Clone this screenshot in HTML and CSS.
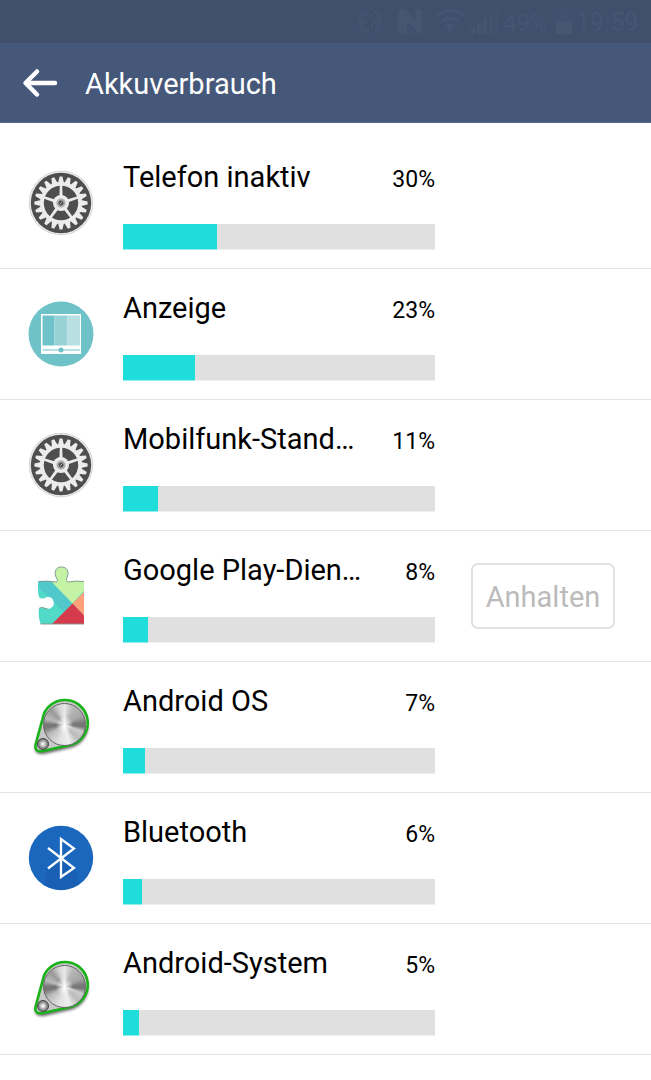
FILE: index.html
```html
<!DOCTYPE html>
<html lang="de">
<head>
<meta charset="utf-8">
<title>Akkuverbrauch</title>
<link rel="stylesheet" href="styles.css">
</head>
<body>
<svg class="defs" width="0" height="0" aria-hidden="true">
  <defs>
    <radialGradient id="hub"><stop offset="0" stop-color="#333"/><stop offset=".4" stop-color="#555"/><stop offset=".65" stop-color="#aaa"/><stop offset="1" stop-color="#bbb"/></radialGradient>
    <g id="tooth"><path d="M-3-20L-1.400-26.600H1.400L3-20Z"/></g>
    <g id="teeth"><use href="#tooth"/><use href="#tooth" transform="rotate(18)"/><use href="#tooth" transform="rotate(36)"/><use href="#tooth" transform="rotate(54)"/><use href="#tooth" transform="rotate(72)"/></g>
    <path id="spoke" d="M-1.6-5L-1.2-18H1.2L1.6-5Z"/>
    <symbol id="gear" viewBox="-33 -33 66 66">
      <circle r="32.2" fill="#d0d0d0"/><circle r="31.5" fill="#ececec"/><circle r="30.2" fill="#4e4e4e"/>
      <g fill="#ececec"><use href="#teeth"/><use href="#teeth" transform="rotate(90)"/><use href="#teeth" transform="rotate(180)"/><use href="#teeth" transform="rotate(270)"/></g>
      <circle r="19.100" fill="none" stroke="#ececec" stroke-width="3.800"/>
      <g fill="#ececec"><use href="#spoke"/><use href="#spoke" transform="rotate(72)"/><use href="#spoke" transform="rotate(144)"/><use href="#spoke" transform="rotate(216)"/><use href="#spoke" transform="rotate(288)"/><circle r="8"/></g>
      <circle r="4.7" fill="url(#hub)"/><path d="M-.9 1L1.1-1.2" stroke="#ddd" stroke-width=".8"/>
    </symbol>
    <filter id="soft" x="-30%" y="-30%" width="160%" height="160%"><feGaussianBlur stdDeviation="1.8"/></filter>
    <symbol id="case" viewBox="0 0 66 66" overflow="visible">
      <path d="M7 53L15 27A22.800 22.800 0 1 1 44 53.500L16 60Q6 61 7 53Z" fill="#000" opacity=".6" filter="url(#soft)"/>
      <path d="M7.500 51L14.500 25A22.800 22.800 0 1 1 42 51L15 57Q6.500 58.500 7.500 51Z" fill="#c8c8c8" stroke="#19b219" stroke-width="2.600"/>
    </symbol>
    <clipPath id="puzzle"><path d="M12 26Q20 25 29 26.500C31.500 26.500 31 24 30 22.500C27 17 29 11.500 35 11.500C41 11.500 43 17 40.500 22C39.500 24.500 40 26.500 42 26.500Q50 25 57.500 26V68.500H14C12.500 63 11.500 58 12.500 53C16 50.500 17 53 21 53.300C26 53.300 27.500 50 27.300 46.500C27 42.500 23 40.500 19.500 42C16.500 43.500 13 43.500 12.200 40.500C11 36 11.500 30 12 26Z"/></clipPath>
  </defs>
</svg>

<header>
  <div class="status">
    <svg width="146" height="43" viewBox="0 0 146 43">
      <circle cx="13" cy="21.500" r="13" fill="#445270"/>
      <path d="M7 15.500L19 27L13 32V11L19 16L7 27.500" fill="none" stroke="#404d6a" stroke-width="2"/>
      <path class="s-fill" d="M44 9H48.500L58.500 22V9H62Q65 9 65 12V31Q65 34 62 34L50 21V34H44Q41 34 41 31V12Q41 9 44 9ZM52 27L57 34H52Z"/>
      <path class="s-line" d="M79.500 15.500Q93 6 106.500 15.500M85 21Q93 15.500 101 21"/><path class="s-fill" d="M88 25Q93 22 98 25L94.500 28V32H91.500V28Z"/>
      <path class="s-fill" d="M114 28h4v6h-4zM120 23h4v11h-4zM126 18h4v16h-4z"/><path d="M132 14h4v20h-4zM138 9h4v25h-4z" fill="#445270"/>
    </svg>
    <span class="charge">49%</span>
    <svg class="battery" width="18" height="43" viewBox="0 0 18 43"><path d="M2 12h4V9h8v3h4v10H2z" fill="#435170"/><path class="s-fill" d="M2 22h16v12H2z"/></svg>
    <span class="clock">19:59</span>
  </div>
  <div class="toolbar">
    <svg width="36" height="32" viewBox="0 0 36 32"><path d="M15 4.500L3.500 16L15 27.500M4 16H33" fill="none" stroke="#fff" stroke-width="4.500" stroke-linecap="round" stroke-linejoin="round"/></svg>
    <h1>Akkuverbrauch</h1>
  </div>
</header>

<main>
  <section class="row">
    <svg class="icon"><use href="#gear"/></svg>
    <div class="info"><div class="label"><h2>Telefon inaktiv</h2><span>30%</span></div><div class="bar"><i style="width:94px"></i></div></div>
  </section>
  <section class="row">
    <svg class="icon" viewBox="0 0 66 66"><circle cx="33" cy="33" r="32.500" fill="#6fc2c8"/><path d="M13 13h40v40H13z" fill="#fff"/><path d="M14.500 14.500h12v30h-12z" fill="#6fc2c8"/><path d="M26.500 14.500h13v30h-13z" fill="#97d2d6"/><path d="M39.500 14.500h12.500v30H39.500z" fill="#b8e0e3"/><path d="M14.500 49H52" stroke="#6fc2c8"/><circle cx="33" cy="49" r="2.500" fill="#6fc2c8"/></svg>
    <div class="info"><div class="label"><h2>Anzeige</h2><span>23%</span></div><div class="bar"><i style="width:72px"></i></div></div>
  </section>
  <section class="row">
    <svg class="icon"><use href="#gear"/></svg>
    <div class="info"><div class="label"><h2>Mobilfunk-Stand…</h2><span>11%</span></div><div class="bar"><i style="width:35px"></i></div></div>
  </section>
  <section class="row">
    <svg class="icon" viewBox="8 3 66 66">
      <g transform="translate(6.500 -4.500)">
        <g clip-path="url(#puzzle)"><path d="M0 0H80V80H0Z" fill="#50dac7"/><path d="M0 20H26L46 48L37 56Z" fill="#51c9cb"/><path d="M19 20V5H65V27L46 48Z" fill="#c5f3a5"/><path d="M46 48L60 34V63Z" fill="#ffa078"/><path d="M46 48L25 69H66Z" fill="#d63a4d"/></g>
        <path d="M12 26Q20 25 29 26.500C31.500 26.500 31 24 30 22.500C27 17 29 11.500 35 11.500C41 11.500 43 17 40.500 22C39.500 24.500 40 26.500 42 26.500Q50 25 57.500 26M12.500 53C16 50.500 17 53 21 53.300M14 68.500H57.500" fill="none" stroke="#7f958a" stroke-width=".9"/>
      </g>
    </svg>
    <div class="info"><div class="label"><h2>Google Play-Dien…</h2><span>8%</span></div><div class="bar"><i style="width:25px"></i></div></div>
    <button>Anhalten</button>
  </section>
  <section class="row">
    <div class="icon knob">
      <svg class="case"><use href="#case"/></svg>
      <div class="dial"></div><div class="small-dial"></div>
    </div>
    <div class="info"><div class="label"><h2>Android OS</h2><span>7%</span></div><div class="bar"><i style="width:22px"></i></div></div>
  </section>
  <section class="row">
    <svg class="icon" viewBox="0 0 66 66"><circle cx="33" cy="33" r="32.200" fill="#1b67bd"/><path d="M20 43L33 33L46 43L51 59Q34 70 16 60Z" fill="#195fb4"/><path d="M20 23L46 43L33 52V14L46 23.500L20 43.500" fill="none" stroke="#fff" stroke-width="2.300"/></svg>
    <div class="info"><div class="label"><h2>Bluetooth</h2><span>6%</span></div><div class="bar"><i style="width:19px"></i></div></div>
  </section>
  <section class="row">
    <div class="icon knob">
      <svg class="case"><use href="#case"/></svg>
      <div class="dial"></div><div class="small-dial"></div>
    </div>
    <div class="info"><div class="label"><h2>Android-System</h2><span>5%</span></div><div class="bar"><i style="width:16px"></i></div></div>
  </section>
</main>
</body>
</html>
```
FILE: styles.css
```css
* { box-sizing: border-box; }
body { margin: 0; height: 1080px; overflow: hidden; background: #fff; color: #000; font-family: Roboto, sans-serif; }
.defs { position: absolute; }
h1, h2 { margin: 0; font-weight: 400; white-space: nowrap; }
.status { height: 43px; display: flex; padding-left: 357px; background: #414f6d; color: #475573; line-height: 46px; white-space: nowrap; }
.status svg { flex: none; }
.s-fill { fill: #475573; }
.s-line { fill: none; stroke: #475573; stroke-width: 3; }
.charge { width: 51px; font-size: 24px; }
.clock { margin-left: 4px; font-size: 25px; }
.toolbar { height: 80px; display: flex; align-items: center; padding-left: 22px; gap: 27px; background: #465879; border-bottom: 1px solid #566789; color: #fff; }
.toolbar h1 { font-size: 29px; line-height: 36px; padding-top: 2px; }
main { padding-top: 15px; }
.row { height: 131px; display: flex; align-items: flex-start; padding-left: 28px; border-bottom: 1px solid #e4e4e4; }
.icon { flex: none; width: 66px; height: 66px; margin-top: 32px; }
.info { width: 312px; margin-left: 29px; padding-top: 19px; }
.label { height: 40px; display: flex; justify-content: space-between; align-items: baseline; }
.label h2 { font-size: 29px; line-height: 40px; }
.label span { font-size: 23px; }
.bar { height: 26px; margin-top: 27px; background: linear-gradient(#e0e0e0 25px, #f0f0f0 25px); }
.bar i { display: block; height: 100%; background: linear-gradient(#1edddb 25px, #90eeed 25px); }
button { width: 144px; height: 66px; margin: 32px 0 0 36px; padding: 2px 0 0; background: #fff; border: 2px solid #e2e2e2; border-radius: 7px; color: #bbb; font: 29px Roboto, sans-serif; }
.knob { display: grid; }
.knob > * { grid-area: 1 / 1; }
.case { width: 66px; height: 66px; overflow: visible; }
.dial { width: 43px; height: 43px; margin: 9px 0 0 15px; z-index: 1; border: 1.5px solid #666; border-radius: 50%; background: radial-gradient(#fff, transparent 30%), conic-gradient(#e8e8e8, #b5b5b5 8%, #a5a5a5 18%, #777 24%, #777 27%, #ccc 31%, #bbb 38%, #efefef 46%, #e0e0e0 55%, #bbb 66%, #777 72%, #777 75%, #bbb 80%, #999 88%, #d5d5d5 95%, #e8e8e8); }
.small-dial { width: 12px; height: 12px; margin: 44px 0 0 9px; z-index: 1; border: 1px solid #444; border-radius: 50%; background: radial-gradient(#eee 15%, #999 50%, #555); }
```
